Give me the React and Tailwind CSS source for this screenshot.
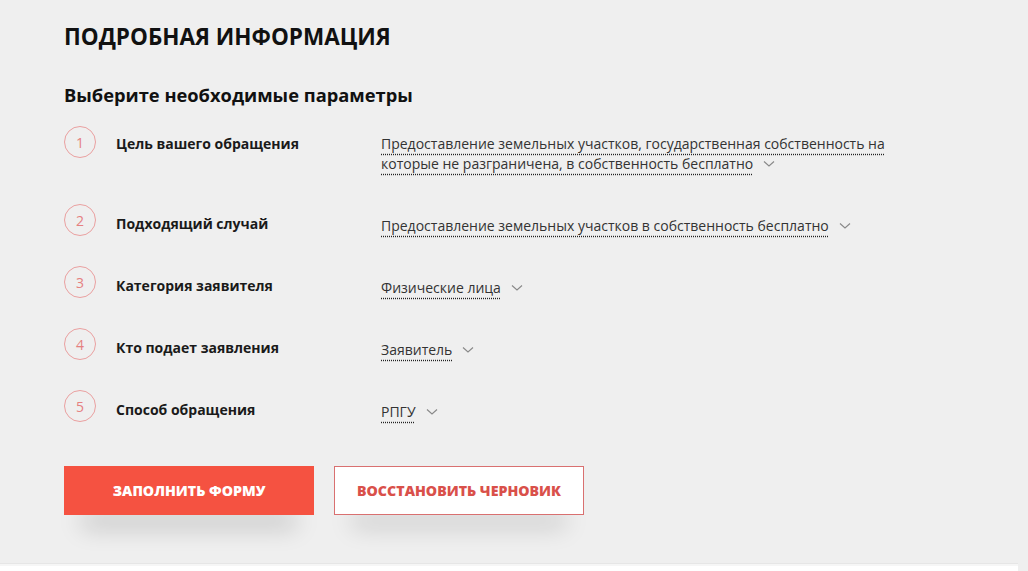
import React from "react";

const rows = [
  { n: 1, label: "Цель вашего обращения", value: ["Предоставление земельных участков, государственная собственность на", "которые не разграничена, в собственность бесплатно"] },
  { n: 2, label: "Подходящий случай", value: ["Предоставление земельных участков в собственность бесплатно"] },
  { n: 3, label: "Категория заявителя", value: ["Физические лица"] },
  { n: 4, label: "Кто подает заявления", value: ["Заявитель"] },
  { n: 5, label: "Способ обращения", value: ["РПГУ"] },
];

function Chevron() {
  return (
    <svg width="12" height="8" viewBox="0 0 12 8" className="inline-block ml-[10px] align-middle relative -top-[1px]">
      <path d="M1 1.5 L6 6 L11 1.5" fill="none" stroke="#888" strokeWidth="1.1" />
    </svg>
  );
}

export default function App() {
  return (
    <div className="w-[1028px] h-[571px] overflow-hidden bg-[#efefef] flex flex-col" style={{ fontFamily: "'Open Sans', 'Noto Sans', sans-serif" }}>
      <div className="flex-1 pl-[64px] pt-[21px]">
        <h1 className="text-[22.5px] leading-[32px] font-bold text-[#111] uppercase">Подробная информация</h1>
        <h2 className="mt-[28px] text-[18.3px] leading-[28px] font-bold text-[#111]">Выберите необходимые параметры</h2>
        <div className="mt-[17px] flex flex-col gap-[30px]">
          {rows.map((r) => (
            <div key={r.n} className="flex items-start">
              <div className="w-[32px] h-[32px] rounded-full border border-[#eaa0a0] flex items-center justify-center text-[14px] text-[#e58080] shrink-0">
                {r.n}
              </div>
              <div className={`w-[285px] pl-[20px] shrink-0 ${r.n === 1 ? "mt-[8px]" : "mt-[10px]"} text-[14px] leading-[20px] font-bold text-[#1a1a1a]`}>{r.label}</div>
              <div className={`${r.n === 1 ? "mt-[8px]" : "mt-[12px]"} text-[14px] leading-[20px] text-[#333]`}>
                {r.value.map((line, i) => (
                  <div key={i}>
                    <span className="underline decoration-dotted decoration-[#222] underline-offset-[5px]">{line}</span>
                    {i === r.value.length - 1 && <Chevron />}
                  </div>
                ))}
              </div>
            </div>
          ))}
        </div>
        <div className="mt-[44px] flex gap-[20px]">
          <button className="w-[250px] h-[49px] bg-[#f55241] text-white text-[14.2px] font-extrabold uppercase shadow-[0_30px_24px_-18px_rgba(0,0,0,0.22)]">
            Заполнить форму
          </button>
          <button className="w-[250px] h-[49px] bg-white border border-[#d97070] text-[#d9504a] text-[14.2px] font-extrabold uppercase shadow-[0_30px_24px_-18px_rgba(0,0,0,0.18)]">
            Восстановить черновик
          </button>
        </div>
      </div>
      <div className="h-[8px] flex">
        <div className="w-[1018px] border-t border-[#e6e6e6] pt-[2px] bg-[#f6f6f6]">
          <div className="h-full bg-white"></div>
        </div>
      </div>
    </div>
  );
}
